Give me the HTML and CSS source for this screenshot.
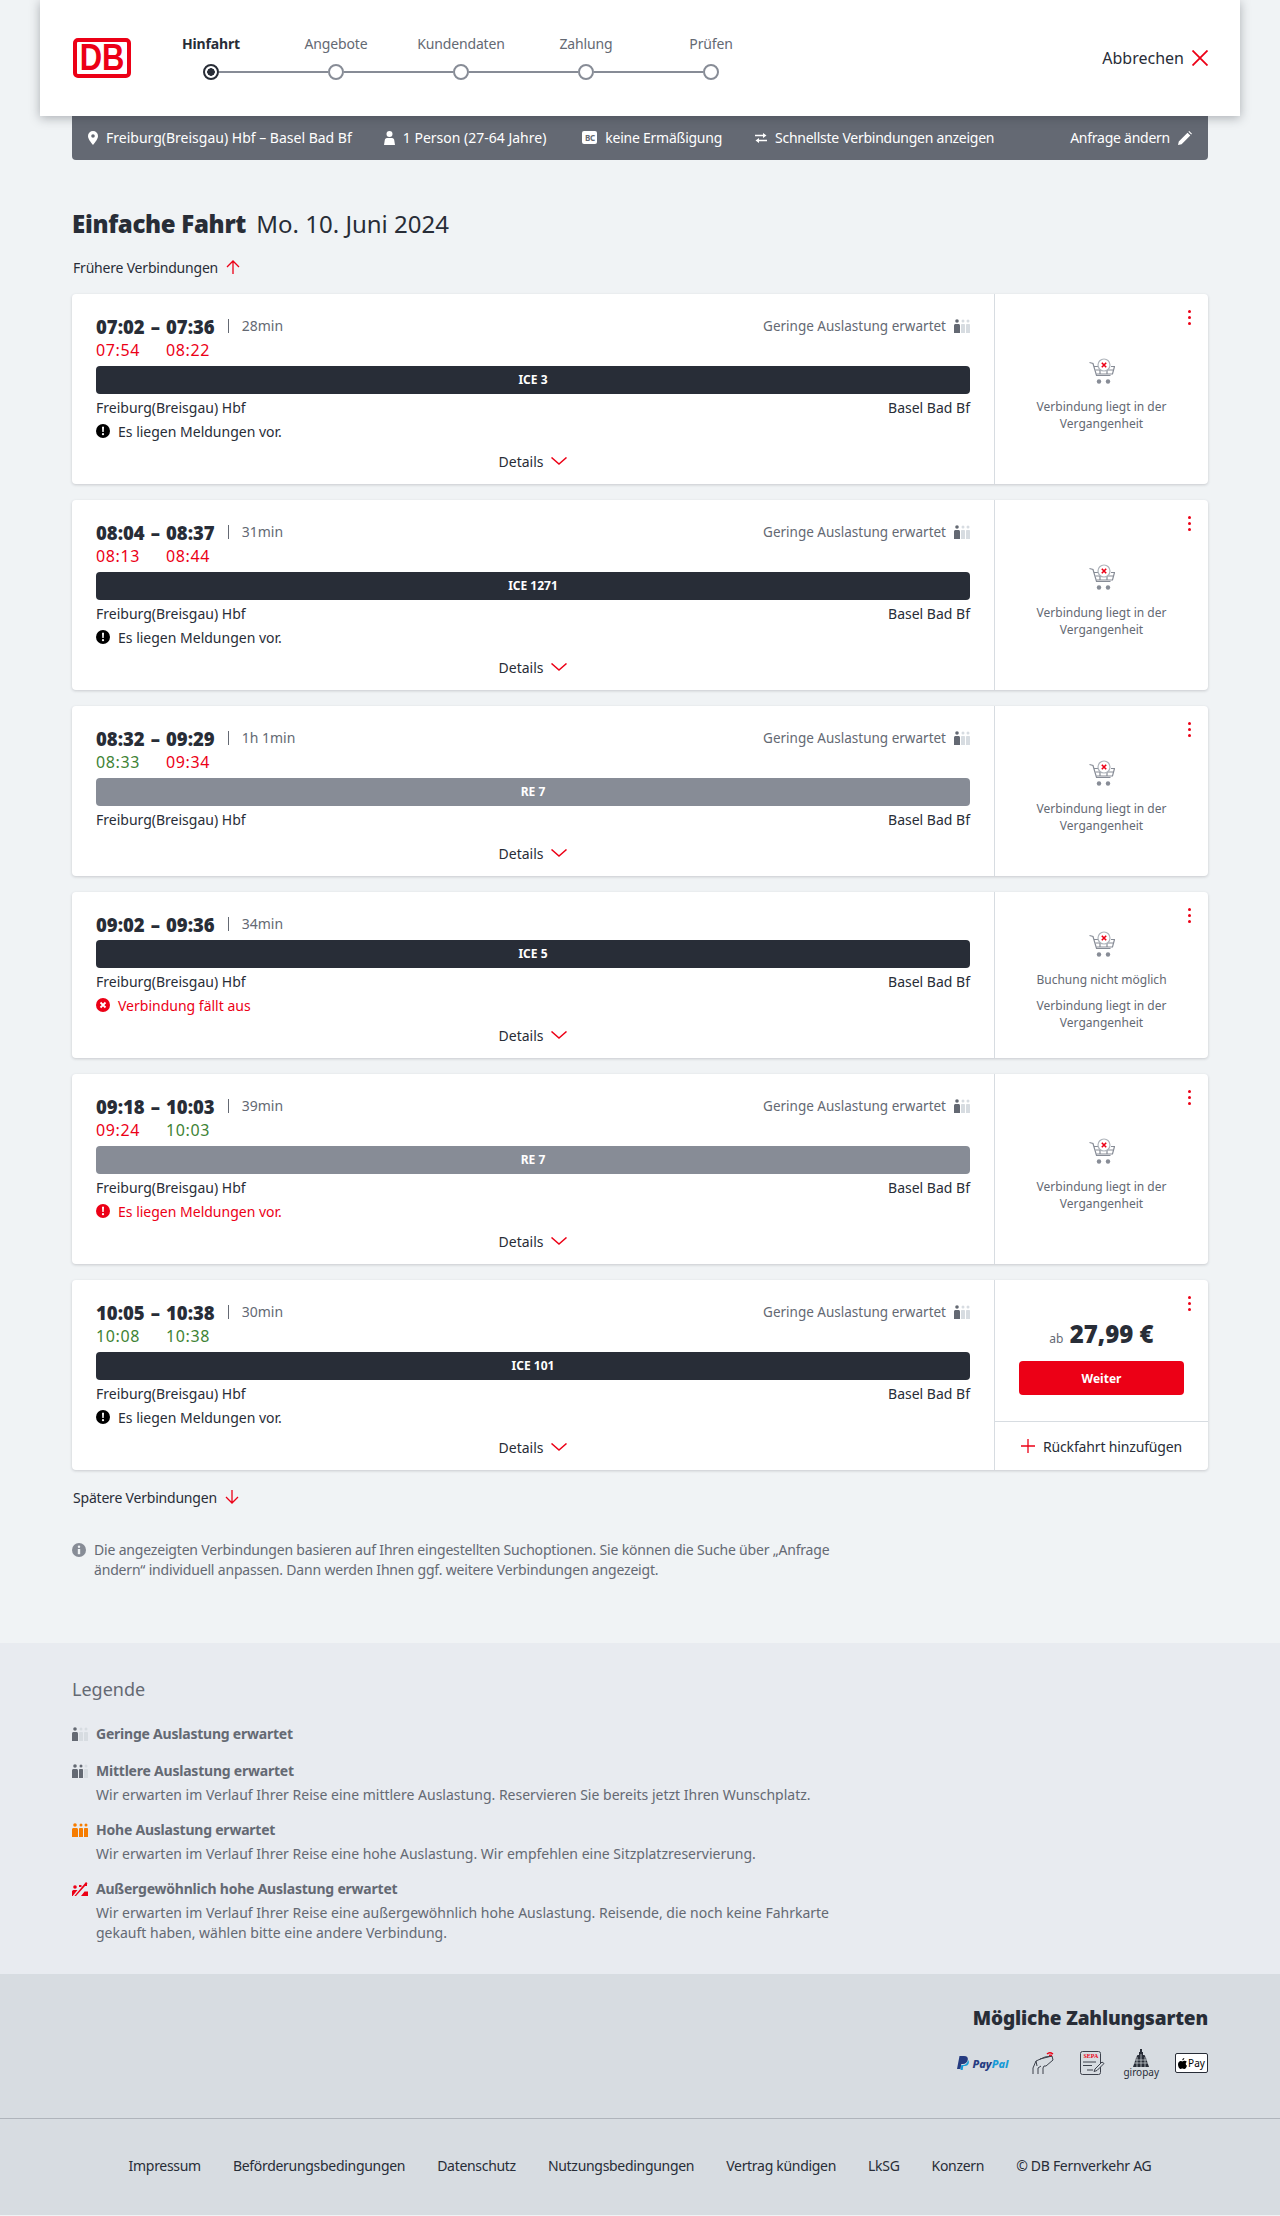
FILE: index.html
```html
<!DOCTYPE html>
<html lang="de">
  <head>
    <title>Einfache Fahrt - Verbindungen</title>
    <link rel="stylesheet" href="styles.css">
  </head>
  <body>
    <svg class="sprite" width="0" height="0">
      <symbol id="load" viewBox="0 0 16 14">
        <circle cx="3" cy="2" r="1.8" class="p1"/><path class="p1" d="M0 6.500C0 5.500.8 5 1.500 5h3C5.200 5 6 5.500 6 6.500V14H0z"/>
        <circle cx="9" cy="2" r="1.500" class="p2"/><path class="p2" d="M7 6c0-.6.5-1 1-1h2c.5 0 1 .4 1 1v8H7z"/>
        <circle cx="14" cy="2" r="1.500" class="p3"/><path class="p3" d="M12 6c0-.6.5-1 1-1h2c.5 0 1 .4 1 1v8h-4z"/>
      </symbol>
      <symbol id="cart" viewBox="0 0 26 26">
        <path d="M.5 4.500l3.500 1 3.500 12h14" fill="none" stroke="#878c96" stroke-width="1.200"/>
        <path d="M5 8.500h5M22 8.500h3.500l-2 7.500H7.500M6.500 12h18" fill="none" stroke="#878c96" stroke-width="1.200"/>
        <path d="M11 16v-4M18 16v-4" fill="none" stroke="#878c96" stroke-width="1.200"/>
        <circle cx="15" cy="7" r="6" fill="#fff" stroke="#afb4bb" stroke-width="1.200"/>
        <path d="M12.800 4.800l4.400 4.400M17.200 4.800l-4.400 4.400" stroke="#ec0016" stroke-width="1.600"/>
        <circle cx="10" cy="23.500" r="2.200" fill="#878c96"/><circle cx="19" cy="23.500" r="2.200" fill="#878c96"/>
      </symbol>
      <symbol id="alert" viewBox="0 0 14 14">
        <circle cx="7" cy="7" r="7"/>
        <path d="M6 2.800h2l-.3 5.200H6.300z" fill="#fff"/><circle cx="7" cy="10.200" r="1.100" fill="#fff"/>
      </symbol>
      <symbol id="chev" viewBox="0 0 16 8">
        <path d="M.5.500L8 7l7.500-6.500" fill="none" stroke="#ec0016" stroke-width="1.500"/>
      </symbol>
    </svg>

    <header class="top">
      <div class="logo"><span class="logo-text">DB</span></div>
      <div class="steps">
        <div class="labels">
          <span class="step-label step-active">Hinfahrt</span>
          <span class="step-label">Angebote</span>
          <span class="step-label">Kundendaten</span>
          <span class="step-label">Zahlung</span>
          <span class="step-label">Prüfen</span>
        </div>
        <div class="track">
          <span class="dot dot-active"></span><span class="line"></span>
          <span class="dot"></span><span class="line"></span>
          <span class="dot"></span><span class="line"></span>
          <span class="dot"></span><span class="line"></span>
          <span class="dot"></span>
        </div>
      </div>
      <div class="cancel">
        Abbrechen
        <svg width="16" height="16" viewBox="0 0 16 16"><path d="M.5.500l15 15M15.500.500l-15 15" stroke="#ec0016" stroke-width="1.800"/></svg>
      </div>
    </header>

    <div class="query">
      <span class="query-item">
        <svg width="10" height="14" viewBox="0 0 10 14"><path fill-rule="evenodd" fill="#fff" d="M5 0a5 5 0 0 1 5 5c0 3-3 6.500-5 9-2-2.500-5-6-5-9a5 5 0 0 1 5-5zm0 3.200a1.800 1.800 0 1 0 0 3.600 1.800 1.800 0 0 0 0-3.600z"/></svg>
        Freiburg(Breisgau) Hbf – Basel Bad Bf
      </span>
      <span class="query-item">
        <svg width="11" height="14" viewBox="0 0 11 14"><circle cx="5.500" cy="3" r="3" fill="#fff"/><path fill="#fff" d="M3 7h5c1.500 0 2 1 2.200 2l.8 5H0l.8-5C1 8 1.500 7 3 7z"/></svg>
        1 Person (27-64 Jahre)
      </span>
      <span class="query-item query-tight query-bc">
        <span class="bc">BC</span>
        keine Ermäßigung
      </span>
      <span class="query-item query-tight query-fast">
        <svg width="12" height="10" viewBox="0 0 12 10"><path d="M0 2.500h8M4 7.500h8" stroke="#fff" stroke-width="1.500"/><path d="M8 0l3.500 2.500L8 5zM4 5L.5 7.500 4 10z" fill="#fff"/></svg>
        Schnellste Verbindungen anzeigen
      </span>
      <span class="query-item query-tight query-edit">
        Anfrage ändern
        <svg width="14" height="14" viewBox="0 0 14 14"><path fill="#fff" d="M0 14l.8-3.600L9.500 1.700l2.800 2.800L3.600 13.200zM10.400.8l.8-.8L14 2.800l-.8.800z"/></svg>
      </span>
    </div>

    <main class="main">
      <h1 class="title"><strong>Einfache Fahrt</strong> Mo. 10. Juni 2024</h1>
      <div class="more more-early">
        Frühere Verbindungen
        <svg width="14" height="14" viewBox="0 0 14 14"><path d="M7 14V1M1 7l6-6 6 6" fill="none" stroke="#ec0016" stroke-width="1.300"/></svg>
      </div>

      <article class="card">
        <div class="card-left">
          <div class="times">
            <span class="dep">07:02</span><span class="dash">–</span><span class="arr">07:36</span>
            <span class="dur">28min</span>
            <span class="load">Geringe Auslastung erwartet <svg class="load-icon low" width="16" height="14"><use href="#load"/></svg></span>
            <span class="rt late">07:54</span><span class="rt late rt-arr">08:22</span>
          </div>
          <div class="train">ICE 3</div>
          <div class="stations"><span>Freiburg(Breisgau) Hbf</span><span>Basel Bad Bf</span></div>
          <div class="msg"><svg width="14" height="14"><use href="#alert"/></svg>Es liegen Meldungen vor.</div>
          <div class="details">Details <svg width="16" height="8"><use href="#chev"/></svg></div>
        </div>
        <div class="card-right">
          <span class="menu"><i></i><i></i><i></i></span>
          <svg width="26" height="26"><use href="#cart"/></svg>
          <p class="past">Verbindung liegt in der Vergangenheit</p>
        </div>
      </article>

      <article class="card">
        <div class="card-left">
          <div class="times">
            <span class="dep">08:04</span><span class="dash">–</span><span class="arr">08:37</span>
            <span class="dur">31min</span>
            <span class="load">Geringe Auslastung erwartet <svg class="load-icon low" width="16" height="14"><use href="#load"/></svg></span>
            <span class="rt late">08:13</span><span class="rt late rt-arr">08:44</span>
          </div>
          <div class="train">ICE 1271</div>
          <div class="stations"><span>Freiburg(Breisgau) Hbf</span><span>Basel Bad Bf</span></div>
          <div class="msg"><svg width="14" height="14"><use href="#alert"/></svg>Es liegen Meldungen vor.</div>
          <div class="details">Details <svg width="16" height="8"><use href="#chev"/></svg></div>
        </div>
        <div class="card-right">
          <span class="menu"><i></i><i></i><i></i></span>
          <svg width="26" height="26"><use href="#cart"/></svg>
          <p class="past">Verbindung liegt in der Vergangenheit</p>
        </div>
      </article>

      <article class="card">
        <div class="card-left">
          <div class="times">
            <span class="dep">08:32</span><span class="dash">–</span><span class="arr">09:29</span>
            <span class="dur">1h 1min</span>
            <span class="load">Geringe Auslastung erwartet <svg class="load-icon low" width="16" height="14"><use href="#load"/></svg></span>
            <span class="rt ontime">08:33</span><span class="rt late rt-arr">09:34</span>
          </div>
          <div class="train train-regio">RE 7</div>
          <div class="stations"><span>Freiburg(Breisgau) Hbf</span><span>Basel Bad Bf</span></div>
          <div class="details">Details <svg width="16" height="8"><use href="#chev"/></svg></div>
        </div>
        <div class="card-right">
          <span class="menu"><i></i><i></i><i></i></span>
          <svg width="26" height="26"><use href="#cart"/></svg>
          <p class="past">Verbindung liegt in der Vergangenheit</p>
        </div>
      </article>

      <article class="card">
        <div class="card-left">
          <div class="times">
            <span class="dep">09:02</span><span class="dash">–</span><span class="arr">09:36</span>
            <span class="dur">34min</span>
          </div>
          <div class="train">ICE 5</div>
          <div class="stations"><span>Freiburg(Breisgau) Hbf</span><span>Basel Bad Bf</span></div>
          <div class="msg msg-red">
            <svg width="14" height="14" viewBox="0 0 14 14"><circle cx="7" cy="7" r="7" fill="#ec0016"/><path d="M4.500 4.500l5 5M9.500 4.500l-5 5" stroke="#fff" stroke-width="1.800"/></svg>Verbindung fällt aus
          </div>
          <div class="details">Details <svg width="16" height="8"><use href="#chev"/></svg></div>
        </div>
        <div class="card-right">
          <span class="menu"><i></i><i></i><i></i></span>
          <svg width="26" height="26"><use href="#cart"/></svg>
          <p class="past past-first">Buchung nicht möglich</p>
          <p class="past">Verbindung liegt in der Vergangenheit</p>
        </div>
      </article>

      <article class="card">
        <div class="card-left">
          <div class="times">
            <span class="dep">09:18</span><span class="dash">–</span><span class="arr">10:03</span>
            <span class="dur">39min</span>
            <span class="load">Geringe Auslastung erwartet <svg class="load-icon low" width="16" height="14"><use href="#load"/></svg></span>
            <span class="rt late">09:24</span><span class="rt ontime rt-arr">10:03</span>
          </div>
          <div class="train train-regio">RE 7</div>
          <div class="stations"><span>Freiburg(Breisgau) Hbf</span><span>Basel Bad Bf</span></div>
          <div class="msg msg-red"><svg width="14" height="14"><use href="#alert"/></svg>Es liegen Meldungen vor.</div>
          <div class="details">Details <svg width="16" height="8"><use href="#chev"/></svg></div>
        </div>
        <div class="card-right">
          <span class="menu"><i></i><i></i><i></i></span>
          <svg width="26" height="26"><use href="#cart"/></svg>
          <p class="past">Verbindung liegt in der Vergangenheit</p>
        </div>
      </article>

      <article class="card">
        <div class="card-left">
          <div class="times">
            <span class="dep">10:05</span><span class="dash">–</span><span class="arr">10:38</span>
            <span class="dur">30min</span>
            <span class="load">Geringe Auslastung erwartet <svg class="load-icon low" width="16" height="14"><use href="#load"/></svg></span>
            <span class="rt ontime">10:08</span><span class="rt ontime rt-arr">10:38</span>
          </div>
          <div class="train">ICE 101</div>
          <div class="stations"><span>Freiburg(Breisgau) Hbf</span><span>Basel Bad Bf</span></div>
          <div class="msg"><svg width="14" height="14"><use href="#alert"/></svg>Es liegen Meldungen vor.</div>
          <div class="details">Details <svg width="16" height="8"><use href="#chev"/></svg></div>
        </div>
        <div class="card-right card-buy">
          <span class="menu"><i></i><i></i><i></i></span>
          <div class="buy">
            <div class="price"><small>ab</small> 27,99 €</div>
            <button class="next">Weiter</button>
          </div>
          <div class="return">
            <svg width="14" height="14" viewBox="0 0 14 14"><path d="M7 0v14M0 7h14" stroke="#ec0016" stroke-width="1.300"/></svg>
            Rückfahrt hinzufügen
          </div>
        </div>
      </article>

      <div class="more more-late">
        Spätere Verbindungen
        <svg width="14" height="14" viewBox="0 0 14 14"><path d="M7 0v13M1 7l6 6 6-6" fill="none" stroke="#ec0016" stroke-width="1.300"/></svg>
      </div>

      <div class="info">
        <svg width="14" height="14" viewBox="0 0 14 14"><circle cx="7" cy="7" r="7" fill="#878c96"/><circle cx="7" cy="3.700" r="1.200" fill="#f0f3f5"/><path d="M5.800 6h2.400v5.200H5.800z" fill="#f0f3f5"/></svg>
        <p>Die angezeigten Verbindungen basieren auf Ihren eingestellten Suchoptionen. Sie können die Suche über „Anfrage ändern“ individuell anpassen. Dann werden Ihnen ggf. weitere Verbindungen angezeigt.</p>
      </div>
    </main>

    <section class="legend">
      <h2>Legende</h2>
      <div class="legend-row">
        <svg class="load-icon low" width="16" height="14"><use href="#load"/></svg>
        <div><h3>Geringe Auslastung erwartet</h3></div>
      </div>
      <div class="legend-row">
        <svg class="load-icon mid" width="16" height="14"><use href="#load"/></svg>
        <div>
          <h3>Mittlere Auslastung erwartet</h3>
          <p>Wir erwarten im Verlauf Ihrer Reise eine mittlere Auslastung. Reservieren Sie bereits jetzt Ihren Wunschplatz.</p>
        </div>
      </div>
      <div class="legend-row">
        <svg class="load-icon high" width="16" height="14"><use href="#load"/></svg>
        <div>
          <h3>Hohe Auslastung erwartet</h3>
          <p>Wir erwarten im Verlauf Ihrer Reise eine hohe Auslastung. Wir empfehlen eine Sitzplatzreservierung.</p>
        </div>
      </div>
      <div class="legend-row">
        <svg width="16" height="14" viewBox="0 0 16 14"><circle cx="3" cy="5" r="1.800" fill="#ec0016"/><path fill="#ec0016" d="M0 9.500C0 8.500 1 8 2 8h3.500l-4.800 6H0zM7 3h2.500v2H7zM14 0l1.500 1.200L4 14H2.400zM9 14l3-3.700.5-.8H16V14zM12.500 2h2.500v2h-2.500z"/></svg>
        <div>
          <h3>Außergewöhnlich hohe Auslastung erwartet</h3>
          <p>Wir erwarten im Verlauf Ihrer Reise eine außergewöhnlich hohe Auslastung. Reisende, die noch keine Fahrkarte gekauft haben, wählen bitte eine andere Verbindung.</p>
        </div>
      </div>
    </section>

    <section class="payment">
      <h2>Mögliche Zahlungsarten</h2>
      <div class="pay-icons">
        <span class="paypal">
          <svg width="12" height="14" viewBox="0 0 12 14"><path fill="#253b80" d="M2.500 0H7c3 0 4.200 1.500 3.800 3.800C10.300 6.500 8.500 8 6 8H4.300l-.8 5H0z"/><path fill="#179bd7" d="M11 4c1 .8 1 2 .8 3-.4 2-2 3-4 3H6.300l-.6 4H3.500l.8-5H6c2.500 0 4.500-1.800 5-5z"/></svg>
          <span class="pp-a">Pay</span><span class="pp-b">Pal</span>
        </span>
        <svg class="pay-card" width="24" height="24" viewBox="0 0 24 24" fill="none" stroke="#3c414b" stroke-width="1"><path d="M2 23v-6l3-7 9-4 7-1 1 4-7 6h-2l-1 2v6M7 23v-6l3-2M5 10l1 5M9 8l12-3"/><path d="M16 3c1.500-1.500 4-1.500 6 0M18 4.500c1-.5 2-.5 3 0" stroke="#ec0016" stroke-width="1.400"/></svg>
        <span class="sepa">
          <svg class="sepa-box" width="25" height="24" viewBox="0 0 25 24" fill="none" stroke="#3c414b" stroke-width="1"><rect x=".5" y=".5" width="20" height="23" rx="2"/><path d="M3 11h13M3 14.500h9M7 19h6"/><path d="M15 18l7-7 2 1.500-7 7-3 1z" fill="#d7dce1"/></svg>
          <span class="sepa-text">SEPA</span>
        </span>
        <span class="giro">
          <svg width="16" height="18" viewBox="0 0 16 18"><path fill="#282d37" d="M7 0h2v3h1v3h1.500L13 9l3 9H0L3 9l1.500-3H6V3h1z"/><path stroke="#d7dce1" stroke-width=".7" d="M0 11h16M0 14h16M4 8v10M8 5v13M12 8v10"/></svg>
          <span>giropay</span>
        </span>
        <span class="apple"><svg width="9" height="11" viewBox="0 0 9 11"><path fill="#000" d="M6.300 0c.1 1-.8 2.200-2 2.200C4.100 1.100 5.200.100 6.300 0zM8.800 3.700c-1.600 1-1.300 3.300.2 4C8.500 9 7.500 11 6.300 11c-.8 0-1-.5-1.900-.5s-1.200.5-1.900.5C1.200 11 0 8.600 0 6.500 0 4.200 1.400 2.900 2.800 2.900c.8 0 1.300.5 1.800.5s1-.6 2-.6c.8 0 1.700.3 2.200.9z"/></svg>Pay</span>
      </div>
    </section>

    <footer class="footer">
      <a>Impressum</a>
      <a>Beförderungsbedingungen</a>
      <a>Datenschutz</a>
      <a>Nutzungsbedingungen</a>
      <a>Vertrag kündigen</a>
      <a>LkSG</a>
      <a>Konzern</a>
      <a>© DB Fernverkehr AG</a>
    </footer>
  </body>
</html>
```

FILE: styles.css
```css
* {
  box-sizing: border-box;
}

body {
  margin: 0;
  background-color: #f0f3f5;
  color: #282d37;
  font-family: "Noto Sans", Arial, sans-serif;
  font-size: 14px;
}

h1, h2, h3, p {
  margin: 0;
  font-weight: normal;
}

.sprite {
  position: absolute;
}

/* header */
.top {
  position: relative;
  z-index: 2;
  display: flex;
  align-items: flex-start;
  height: 116px;
  margin: 0 40px;
  padding: 38px 32px 0 33px;
  background-color: #fff;
  box-shadow: 0 2px 10px rgba(40, 45, 55, 0.35);
}

.logo {
  display: flex;
  align-items: center;
  justify-content: center;
  width: 58px;
  height: 40px;
  border: 4px solid #ec0016;
  border-radius: 5px;
  overflow: hidden;
}

.logo-text {
  color: #ec0016;
  font-family: "Liberation Sans", sans-serif;
  font-size: 36px;
  font-weight: bold;
  line-height: 32px;
  transform: scaleX(0.86);
}

.steps {
  width: 625px;
  margin: -4px 0 0 17.5px;
}

.labels {
  display: flex;
}

.step-label {
  width: 125px;
  height: 20px;
  color: #646973;
  font-size: 14px;
  letter-spacing: -0.15px;
  line-height: 20px;
  text-align: center;
}

.step-active {
  color: #282d37;
  font-weight: bold;
}

.track {
  display: flex;
  align-items: center;
  margin: 10px 0 0 54.5px;
  width: 516px;
}

.dot {
  flex: none;
  width: 16px;
  height: 16px;
  border: 2px solid #878c96;
  border-radius: 50%;
  background-color: #fff;
}

.dot-active {
  border-color: #282d37;
  background: radial-gradient(circle, #282d37 0 3.5px, #fff 4px);
}

.line {
  flex: 1;
  height: 2px;
  background-color: #878c96;
}

.cancel {
  display: flex;
  align-items: center;
  gap: 8px;
  height: 40px;
  margin-left: auto;
  font-size: 16px;
}

.query {
  display: flex;
  align-items: center;
  gap: 32px;
  height: 44px;
  margin: 0 72px;
  padding: 0 16px 1px;
  border-radius: 0 0 4px 4px;
  background-color: #646973;
  color: #fff;
  font-size: 14px;
}

.query-item {
  display: flex;
  align-items: center;
  gap: 8px;
}

.query-tight {
  letter-spacing: -0.25px;
}

.query-bc {
  margin-left: 4px;
}

.query-fast {
  margin-left: 1px;
}

.query-edit {
  margin-left: auto;
}

.bc {
  width: 15px;
  height: 13px;
  border-radius: 2px;
  background-color: #fff;
  color: #646973;
  font-size: 8px;
  font-weight: bold;
  line-height: 13px;
  text-align: center;
}

/* main list */
.main {
  height: 1483px;
  padding: 47px 72px 0;
}

.title {
  font-size: 24px;
  line-height: 34px;
}

.title strong {
  margin-right: 4px;
  font-weight: 900;
  letter-spacing: -0.3px;
}

.more {
  display: flex;
  align-items: center;
  gap: 8px;
  height: 20px;
  margin-left: 1px;
  letter-spacing: -0.2px;
}

.more-early {
  margin-top: 16px;
  margin-bottom: 17px;
}

.more-late {
  margin-top: 17px;
}

.card {
  display: flex;
  margin-bottom: 16px;
  border-radius: 4px;
  background-color: #fff;
  box-shadow: 0 1px 3px rgba(40, 45, 55, 0.2);
}

.card-left {
  flex: 1;
  padding: 20px 24px 11px;
}

.times {
  display: grid;
  grid-template-columns: auto auto auto auto 1fr;
  align-items: center;
  grid-auto-rows: 24px;
}

.dep,
.arr,
.dash {
  font-size: 18.5px;
  font-weight: 900;
}

.dash {
  padding: 0 6px;
}

.dur {
  margin-left: 13px;
  padding-left: 13px;
  border-left: 1px solid #646973;
  color: #646973;
  font-size: 14px;
  line-height: 14px;
}

.load {
  display: flex;
  align-items: center;
  justify-content: flex-end;
  gap: 8px;
  color: #646973;
  font-size: 13.5px;
}

.rt {
  margin-top: -1px;
  font-size: 16px;
  letter-spacing: 0.6px;
}

.rt-arr {
  grid-column: 3;
}

.late {
  color: #ec0016;
}

.ontime {
  color: #408335;
}

.p1 { fill: var(--p1); }
.p2 { fill: var(--p2); }
.p3 { fill: var(--p3); }

.low { --p1: #646973; --p2: #d7dce1; --p3: #d7dce1; }
.mid { --p1: #646973; --p2: #646973; --p3: #d7dce1; }
.high { --p1: #f67c00; --p2: #f67c00; --p3: #f67c00; }

.train {
  height: 28px;
  margin-top: 4px;
  border-radius: 4px;
  background-color: #282d37;
  color: #fff;
  font-size: 12px;
  font-weight: bold;
  line-height: 28px;
  text-align: center;
}

.train-regio {
  background-color: #878c96;
}

.stations {
  display: flex;
  justify-content: space-between;
  height: 24px;
  margin-top: 2px;
  line-height: 24px;
}

.msg {
  display: flex;
  align-items: center;
  gap: 8px;
  height: 20px;
  margin: 1px 0 -1px;
}

.msg-red {
  color: #ec0016;
}

.msg-red svg {
  fill: #ec0016;
}

.details {
  display: flex;
  align-items: center;
  justify-content: center;
  gap: 8px;
  height: 24px;
  margin-top: 9px;
}

.card-right {
  position: relative;
  display: flex;
  flex-direction: column;
  align-items: center;
  justify-content: center;
  flex: none;
  width: 214px;
  padding: 11px 32px 0;
  border-left: 1px solid #d7dce1;
}

.menu {
  position: absolute;
  top: 16px;
  right: 17px;
  display: flex;
  flex-direction: column;
  gap: 3px;
}

.menu i {
  width: 3px;
  height: 3px;
  border-radius: 50%;
  background-color: #ec0016;
}

.past {
  margin-top: 14px;
  color: #646973;
  font-size: 12px;
  line-height: 17px;
  text-align: center;
}

.past-first {
  margin-bottom: -5px;
}

.card-buy {
  padding: 0;
}

.buy {
  display: flex;
  flex-direction: column;
  align-items: center;
  justify-content: flex-end;
  flex: 1;
  width: 100%;
  padding: 0 24px 26px;
  border-bottom: 1px solid #d7dce1;
}

.price {
  margin-bottom: 11px;
  font-size: 24px;
  font-weight: 900;
}

.price small {
  color: #646973;
  font-size: 12px;
  font-weight: normal;
}

.next {
  width: 165px;
  height: 34px;
  border: none;
  border-radius: 4px;
  background-color: #ec0016;
  color: #fff;
  font-family: inherit;
  font-size: 12px;
  font-weight: bold;
}

.return {
  display: flex;
  align-items: center;
  gap: 8px;
  height: 48px;
  letter-spacing: -0.15px;
}

.info {
  display: flex;
  gap: 8px;
  margin-top: 33px;
  color: #646973;
  font-size: 14px;
  letter-spacing: -0.18px;
  line-height: 20px;
}

.info svg {
  flex: none;
  margin-top: 3px;
}

.info p {
  width: 760px;
}

/* legend */
.legend {
  height: 331px;
  padding: 32px 72px 0;
  background-color: #e8ebf0;
  color: #646973;
}

.legend h2 {
  margin-bottom: 19px;
  font-size: 18px;
  line-height: 28px;
}

.legend-row {
  display: flex;
  gap: 8px;
  margin-bottom: 13px;
}

.legend-row svg {
  flex: none;
  margin-top: 5px;
}

.legend h3 {
  font-size: 14px;
  font-weight: bold;
  letter-spacing: -0.22px;
  line-height: 24px;
}

.legend p {
  width: 760px;
  margin-top: 2px;
  line-height: 20px;
}

/* payment */
.payment {
  height: 145px;
  padding: 30px 72px 0;
  border-bottom: 1px solid #afb4bb;
  background-color: #d7dce1;
}

.payment h2 {
  font-size: 19px;
  font-weight: 900;
  letter-spacing: -0.15px;
  line-height: 28px;
  text-align: right;
}

.pay-icons {
  display: flex;
  align-items: center;
  justify-content: flex-end;
  height: 36px;
  margin-top: 13px;
}

.paypal {
  display: flex;
  align-items: center;
  gap: 3px;
  font-size: 11px;
  font-style: italic;
  font-weight: 800;
}

.pp-a {
  color: #253b80;
  margin-right: -3px;
}

.pp-b {
  color: #179bd7;
}

.pay-card {
  margin-left: 23px;
}

.sepa {
  position: relative;
  display: flex;
  margin-left: 25px;
}

.sepa-text {
  position: absolute;
  top: 2px;
  left: 3px;
  color: #ec0016;
  font-family: "Liberation Serif", serif;
  font-size: 6px;
  font-weight: bold;
}

.giro {
  display: flex;
  flex-direction: column;
  align-items: center;
  margin-left: 18px;
  font-size: 10px;
  line-height: 11px;
}

.apple {
  display: flex;
  align-items: center;
  justify-content: center;
  gap: 1px;
  width: 33px;
  height: 20px;
  margin-left: 16px;
  border: 1px solid #282d37;
  border-radius: 2px;
  background-color: #fff;
  color: #000;
  font-size: 10px;
}

/* footer */
.footer {
  display: flex;
  align-items: center;
  justify-content: center;
  gap: 32px;
  height: 96px;
  padding-bottom: 4px;
  background-color: #d7dce1;
  letter-spacing: -0.3px;
}
```
